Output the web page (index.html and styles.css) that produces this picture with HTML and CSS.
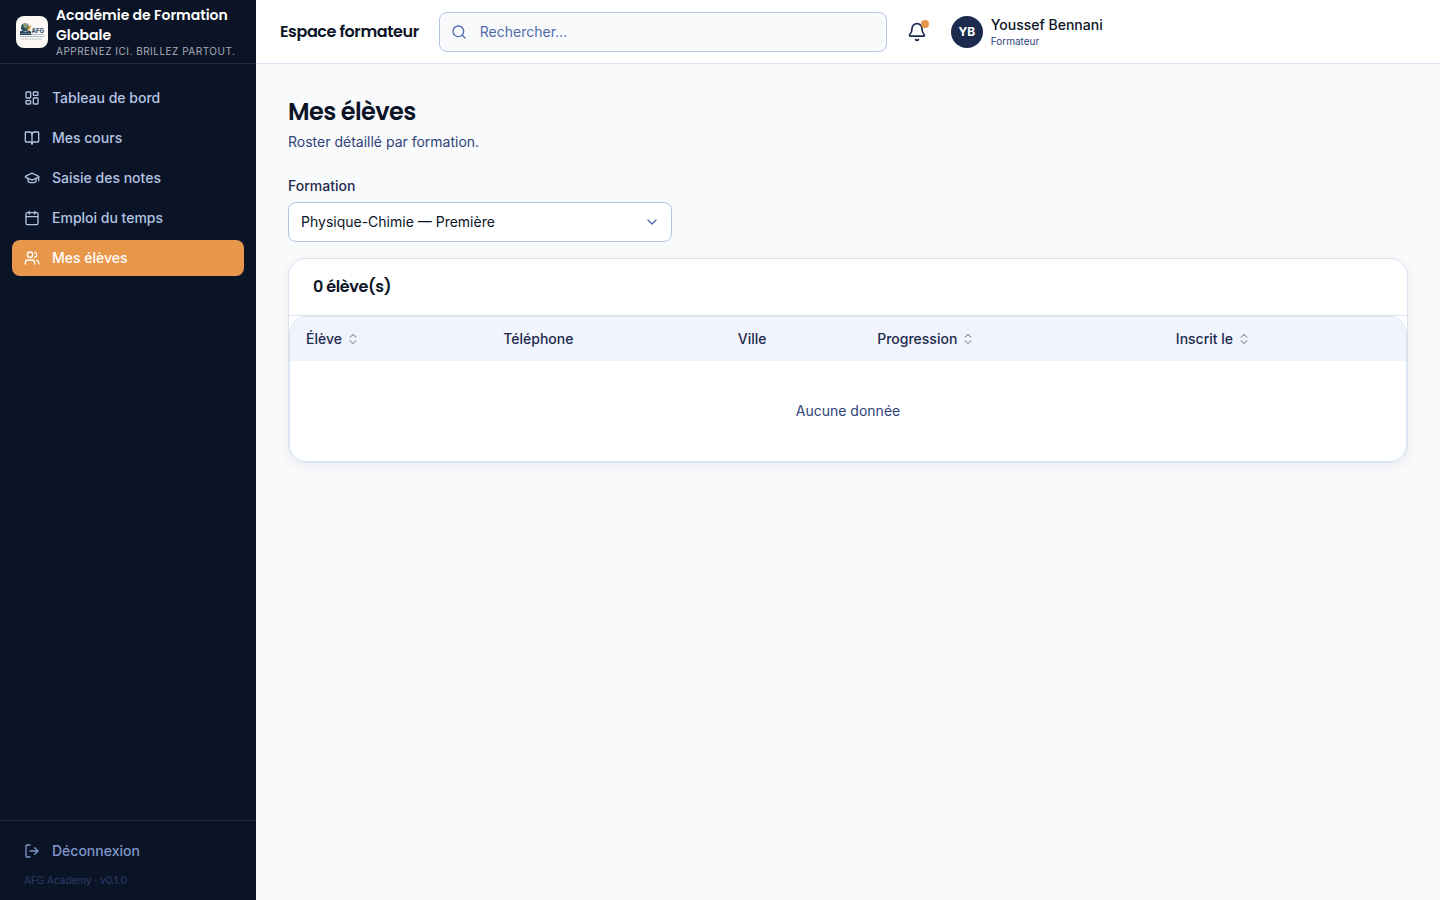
FILE: index.html
```html
<!DOCTYPE html>
<html lang="fr">
<head>
    <meta charset="UTF-8">
    <meta name="viewport" content="width=device-width, initial-scale=1.0">
    <title>Mes élèves - AFG Academy</title>
    <link rel="stylesheet" href="styles.css">
</head>
<body>
    <div class="app">
        <aside class="sidebar">
            <div class="brand">
                <svg class="brand-logo" viewBox="0 0 32 32" aria-hidden="true">
                    <rect width="32" height="32" fill="#fbf8f5"/>
                    <circle cx="9" cy="11.500" r="4" fill="#2b5360"/>
                    <path d="M7 8.500c2-2 5-1.500 6 1l-2 3-3-1z" fill="#8a9a78"/>
                    <path d="M11 14l3.500-5.500.5 2.500-2 4z" fill="#dda53e"/>
                    <path d="M4 15.500c2-.8 4-.5 5.500.8 1.500-1.300 3.500-1.600 5.500-.8v3.500H4z" fill="#22435c"/>
                    <path d="M5 17.500h9" stroke="#8fa5b0" stroke-width=".6"/>
                    <path d="M15 18.500h13M4 20.500h24" stroke="#9aa7b5" stroke-width="1" stroke-dasharray="2 .5"/>
                    <path d="M5.500 23h21" stroke="#b9c0c7" stroke-width="1" stroke-dasharray="3 .5"/>
                    <text class="logo-text" x="15.500" y="16.500">AFG</text>
                </svg>
                <div class="brand-text">
                    <div class="brand-name">Académie de Formation Globale</div>
                    <div class="brand-tagline">Apprenez ici. Brillez partout.</div>
                </div>
            </div>

            <nav class="nav">
                <a href="#" class="nav-link">
                    <svg class="icon" viewBox="0 0 24 24"><rect x="3" y="3" width="7" height="9" rx="1"/><rect x="14" y="3" width="7" height="5" rx="1"/><rect x="14" y="12" width="7" height="9" rx="1"/><rect x="3" y="16" width="7" height="5" rx="1"/></svg>
                    Tableau de bord
                </a>
                <a href="#" class="nav-link">
                    <svg class="icon" viewBox="0 0 24 24"><path d="M12 7v14"/><path d="M3 18a1 1 0 0 1-1-1V4a1 1 0 0 1 1-1h5a4 4 0 0 1 4 4 4 4 0 0 1 4-4h5a1 1 0 0 1 1 1v13a1 1 0 0 1-1 1h-6a3 3 0 0 0-3 3 3 3 0 0 0-3-3z"/></svg>
                    Mes cours
                </a>
                <a href="#" class="nav-link">
                    <svg class="icon" viewBox="0 0 24 24"><path d="M21.42 10.922a1 1 0 0 0-.019-1.838L12.83 5.18a2 2 0 0 0-1.66 0L2.6 9.08a1 1 0 0 0 0 1.832l8.57 3.908a2 2 0 0 0 1.66 0z"/><path d="M22 10v6"/><path d="M6 12.500V16a6 3 0 0 0 12 0v-3.500"/></svg>
                    Saisie des notes
                </a>
                <a href="#" class="nav-link">
                    <svg class="icon" viewBox="0 0 24 24"><path d="M8 2v4"/><path d="M16 2v4"/><rect x="3" y="4" width="18" height="18" rx="2"/><path d="M3 10h18"/></svg>
                    Emploi du temps
                </a>
                <a href="#" class="nav-link active" aria-current="page">
                    <svg class="icon" viewBox="0 0 24 24"><path d="M16 21v-2a4 4 0 0 0-4-4H6a4 4 0 0 0-4 4v2"/><circle cx="9" cy="7" r="4"/><path d="M22 21v-2a4 4 0 0 0-3-3.870"/><path d="M16 3.130a4 4 0 0 1 0 7.750"/></svg>
                    Mes élèves
                </a>
            </nav>

            <div class="sidebar-footer">
                <button type="button" class="nav-link logout">
                    <svg class="icon" viewBox="0 0 24 24"><path d="M9 21H5a2 2 0 0 1-2-2V5a2 2 0 0 1 2-2h4"/><path d="m16 17 5-5-5-5"/><path d="M21 12H9"/></svg>
                    Déconnexion
                </button>
                <p class="version">AFG Academy · v0.1.0</p>
            </div>
        </aside>

        <div class="content">
            <header class="topbar">
                <div class="topbar-title">Espace formateur</div>
                <div class="search">
                    <svg class="icon search-icon" viewBox="0 0 24 24"><circle cx="11" cy="11" r="8"/><path d="m21 21-4.300-4.300"/></svg>
                    <input type="search" placeholder="Rechercher..." aria-label="Rechercher">
                </div>
                <button type="button" class="bell" aria-label="Notifications">
                    <svg class="icon icon-lg" viewBox="0 0 24 24"><path d="M10.268 21a2 2 0 0 0 3.464 0"/><path d="M3.262 15.326A1 1 0 0 0 4 17h16a1 1 0 0 0 .74-1.673C19.410 13.956 18 12.499 18 8A6 6 0 0 0 6 8c0 4.499-1.411 5.956-2.738 7.326"/></svg>
                    <span class="bell-dot"></span>
                </button>
                <div class="user">
                    <div class="avatar">YB</div>
                    <div class="user-text">
                        <div class="user-name">Youssef Bennani</div>
                        <div class="user-role">Formateur</div>
                    </div>
                </div>
            </header>

            <main class="main">
                <h1>Mes élèves</h1>
                <p class="subtitle">Roster détaillé par formation.</p>

                <div class="field">
                    <label for="formation">Formation</label>
                    <div class="select">
                        <select id="formation">
                            <option>Physique-Chimie — Première</option>
                        </select>
                        <svg class="icon select-icon" viewBox="0 0 24 24"><path d="m6 9 6 6 6-6"/></svg>
                    </div>
                </div>

                <section class="card">
                    <h2>0 élève(s)</h2>
                    <div class="table-wrapper">
                        <table>
                            <thead>
                                <tr>
                                    <th><button type="button" class="sort">Élève <svg class="icon icon-sm" viewBox="0 0 24 24"><path d="m7 15 5 5 5-5"/><path d="m7 9 5-5 5 5"/></svg></button></th>
                                    <th>Téléphone</th>
                                    <th>Ville</th>
                                    <th><button type="button" class="sort">Progression <svg class="icon icon-sm" viewBox="0 0 24 24"><path d="m7 15 5 5 5-5"/><path d="m7 9 5-5 5 5"/></svg></button></th>
                                    <th><button type="button" class="sort">Inscrit le <svg class="icon icon-sm" viewBox="0 0 24 24"><path d="m7 15 5 5 5-5"/><path d="m7 9 5-5 5 5"/></svg></button></th>
                                </tr>
                            </thead>
                            <tbody>
                                <tr>
                                    <td colspan="5" class="empty">Aucune donnée</td>
                                </tr>
                            </tbody>
                        </table>
                    </div>
                </section>
            </main>
        </div>
    </div>
</body>
</html>
```
FILE: styles.css
```css
* {
    box-sizing: border-box;
}
body {
    margin: 0;
    font-family: Inter, sans-serif;
    font-size: 14px;
    line-height: 20px;
    color: #0b1426;
    background-color: #f9fafc;
}
h1, h2, p {
    margin: 0;
}
button, input, select {
    font: inherit;
    color: inherit;
}
button {
    padding: 0;
    border: none;
    background: none;
    cursor: pointer;
}
h1, h2, .brand-name, .topbar-title {
    font-family: Poppins, Inter, sans-serif;
    font-weight: 600;
}
h1, h2, .topbar-title {
    letter-spacing: -0.025em;
}
.icon {
    width: 16px;
    height: 16px;
    flex-shrink: 0;
    fill: none;
    stroke: currentColor;
    stroke-width: 2;
    stroke-linecap: round;
    stroke-linejoin: round;
}
.icon-lg {
    width: 20px;
    height: 20px;
}
.icon-sm {
    width: 14px;
    height: 14px;
    opacity: 0.4;
}
.app {
    display: flex;
    min-height: 100vh;
}

/* Sidebar */
.sidebar {
    display: flex;
    flex-direction: column;
    flex-shrink: 0;
    width: 256px;
    background-color: #0b1426;
    color: #b4c4e4;
}
.brand {
    display: flex;
    align-items: center;
    gap: 8px;
    height: 64px;
    padding: 0 16px;
    border-bottom: 1px solid #232b3b;
}
.brand-logo {
    width: 32px;
    height: 32px;
    flex-shrink: 0;
    border-radius: 8px;
}
.logo-text {
    font-family: Inter, sans-serif;
    font-size: 6px;
    font-weight: 700;
    fill: #22435c;
}
.brand-text {
    padding-bottom: 2px;
}
.brand-name {
    color: #fff;
}
.brand-tagline {
    font-size: 10px;
    line-height: 12px;
    letter-spacing: 0.05em;
    text-transform: uppercase;
    white-space: nowrap;
    color: #a9adb5;
}
.nav {
    display: flex;
    flex-direction: column;
    flex: 1;
    gap: 4px;
    padding: 16px 12px;
}
.nav-link {
    display: flex;
    align-items: center;
    gap: 12px;
    width: 100%;
    padding: 8px 12px;
    border-radius: 8px;
    font-weight: 500;
    color: #b4c4e4;
    text-decoration: none;
}
.nav-link.active {
    background-color: #e8964a;
    color: #fff;
}
.sidebar-footer {
    padding: 12px;
    border-top: 1px solid #232b3b;
}
.nav-link.logout {
    color: #8098cb;
}
.version {
    padding: 4px 12px 0;
    font-size: 10px;
    line-height: 15px;
    color: #2b3d6b;
}

/* Topbar */
.content {
    flex: 1;
    min-width: 0;
}
.topbar {
    display: flex;
    align-items: center;
    height: 64px;
    padding: 0 24px;
    background-color: #fff;
    border-bottom: 1px solid #dbe3f1;
}
.topbar-title {
    margin-right: 20px;
    font-size: 16px;
    line-height: 24px;
    white-space: nowrap;
}
.search {
    position: relative;
    flex: 0 1 448px;
}
.search-icon {
    position: absolute;
    top: 12px;
    left: 12px;
    color: #4f6bab;
}
.search input {
    display: block;
    width: 100%;
    height: 40px;
    padding: 0 12px 0 40px;
    border: 1px solid #b4c4e4;
    border-radius: 8px;
    background-color: #f9fafc;
    appearance: none;
}
.search input::placeholder {
    color: #4f6bab;
}
.bell {
    position: relative;
    display: flex;
    align-items: center;
    justify-content: center;
    width: 36px;
    height: 36px;
    margin: 0 16px 0 12px;
    color: #1c2a4d;
}
.bell-dot {
    position: absolute;
    top: 6px;
    right: 6px;
    width: 8px;
    height: 8px;
    border-radius: 50%;
    background-color: #e8964a;
}
.user {
    display: flex;
    align-items: center;
    gap: 8px;
}
.user-text {
    padding-top: 2px;
}
.avatar {
    display: flex;
    align-items: center;
    justify-content: center;
    width: 32px;
    height: 32px;
    border-radius: 50%;
    background-color: #1c2a4d;
    color: #fff;
    font-size: 12px;
    font-weight: 700;
}
.user-name {
    font-weight: 500;
    line-height: 18px;
}
.user-role {
    font-size: 10px;
    line-height: 15px;
    color: #2f4478;
}

/* Page */
.main {
    padding: 32px;
}
h1 {
    font-size: 24px;
    line-height: 32px;
}
.subtitle {
    margin-top: 4px;
    color: #2f4478;
}
.field {
    max-width: 384px;
    margin: 24px 0 16px;
}
.field label {
    display: block;
    margin-bottom: 6px;
    font-weight: 500;
    color: #1c2a4d;
}
.select {
    position: relative;
}
.select select {
    display: block;
    width: 100%;
    height: 40px;
    padding: 0 36px 0 12px;
    border: 1px solid #b4c4e4;
    border-radius: 8px;
    background-color: #fff;
    appearance: none;
}
.select-icon {
    position: absolute;
    top: 12px;
    right: 12px;
    color: #4f6bab;
    pointer-events: none;
}
.card {
    border: 1px solid #dbe3f1;
    border-radius: 18px;
    background-color: #fff;
    box-shadow: 0 4px 12px rgba(11, 20, 38, 0.06);
}
h2 {
    padding: 16px 24px;
    border-bottom: 1px solid #dbe3f1;
    font-size: 16px;
    line-height: 24px;
}
.table-wrapper {
    overflow: hidden;
    border: 1px solid #dbe3f1;
    border-radius: 18px;
}
table {
    width: 100%;
    border-collapse: collapse;
}
th {
    height: 44px;
    padding: 0 16px;
    background-color: #f1f4fc;
    color: #1c2a4d;
    font-weight: 500;
    text-align: left;
    white-space: nowrap;
}
.sort {
    display: inline-flex;
    align-items: center;
    gap: 4px;
    font-weight: 500;
}
.empty {
    padding: 40px 16px;
    text-align: center;
    color: #2f4478;
}
```
